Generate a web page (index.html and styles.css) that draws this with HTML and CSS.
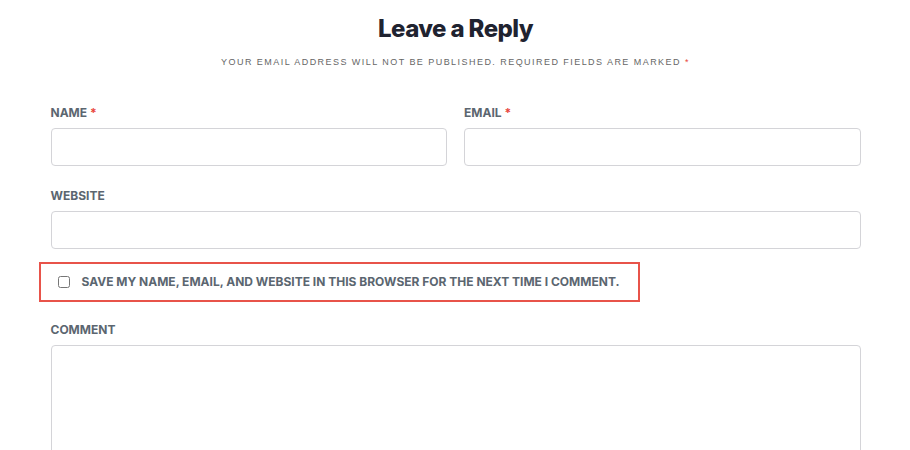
FILE: index.html
```html
<!DOCTYPE html>
<html lang="en">
<head>
  <meta charset="UTF-8" />
  <title>Leave a Reply</title>
  <link rel="stylesheet" href="styles.css">
</head>
<body>
  <div class="reply">
    <h3 class="reply-title">Leave a Reply</h3>
    <p class="notes">Your email address will not be published. Required fields are marked <span class="req">*</span></p>

    <form class="comment-form">
      <div class="row">
        <div class="field">
          <label for="author">Name <span class="req">*</span></label>
          <input type="text" id="author" />
        </div>
        <div class="field">
          <label for="email">Email <span class="req">*</span></label>
          <input type="email" id="email" />
        </div>
      </div>

      <div class="field">
        <label for="url">Website</label>
        <input type="url" id="url" />
      </div>

      <div class="cookies">
        <input type="checkbox" id="cookies" />
        <label for="cookies">Save my name, email, and website in this browser for the next time I comment.</label>
      </div>

      <div class="field">
        <label for="comment">Comment</label>
        <textarea id="comment"></textarea>
      </div>
    </form>
  </div>
</body>
</html>
```

FILE: styles.css
```css
body {
  margin: 0;
  background: #fff;
  font-family: Inter, "Liberation Sans", sans-serif;
}

.reply {
  width: 810px;
  margin: 0 auto;
  padding-top: 14px;
  padding-left: 1px;
}

.reply-title {
  margin: 0;
  text-align: center;
  font-size: 24px;
  font-weight: 800;
  color: #1f2330;
  letter-spacing: -0.6px;
  line-height: 30px;
}

.notes {
  margin: 13px 0 0;
  text-align: center;
  font-size: 9px;
  letter-spacing: 1.45px;
  text-transform: uppercase;
  color: #666;
  font-family: "Liberation Sans", sans-serif;
}

.req {
  color: #e8453c;
}

.comment-form {
  margin-top: 39px;
}

.row {
  display: flex;
  gap: 17px;
}

.row .field {
  flex: 1;
}

.field {
  margin-bottom: 23px;
}

label {
  display: block;
  font-size: 12px;
  font-weight: 700;
  text-transform: uppercase;
  color: #5b6670;
  margin-bottom: 8px;
  line-height: 14px;
}

input[type="text"],
input[type="email"],
input[type="url"],
textarea {
  display: block;
  box-sizing: border-box;
  width: 100%;
  height: 38px;
  border: 1px solid #d4d4d8;
  border-radius: 4px;
  background: #fff;
  margin: 0;
}

textarea {
  height: 120px;
  resize: none;
}

.cookies {
  display: flex;
  align-items: center;
  width: 601px;
  box-sizing: border-box;
  margin: -10px 0 21px -12px;
  height: 40px;
  border: 2px solid #e8534a;
  padding-left: 17px;
}

.cookies input {
  width: 12px;
  height: 12px;
  margin: 0 12px 0 0;
}

.cookies label {
  margin: 0;
}
```
